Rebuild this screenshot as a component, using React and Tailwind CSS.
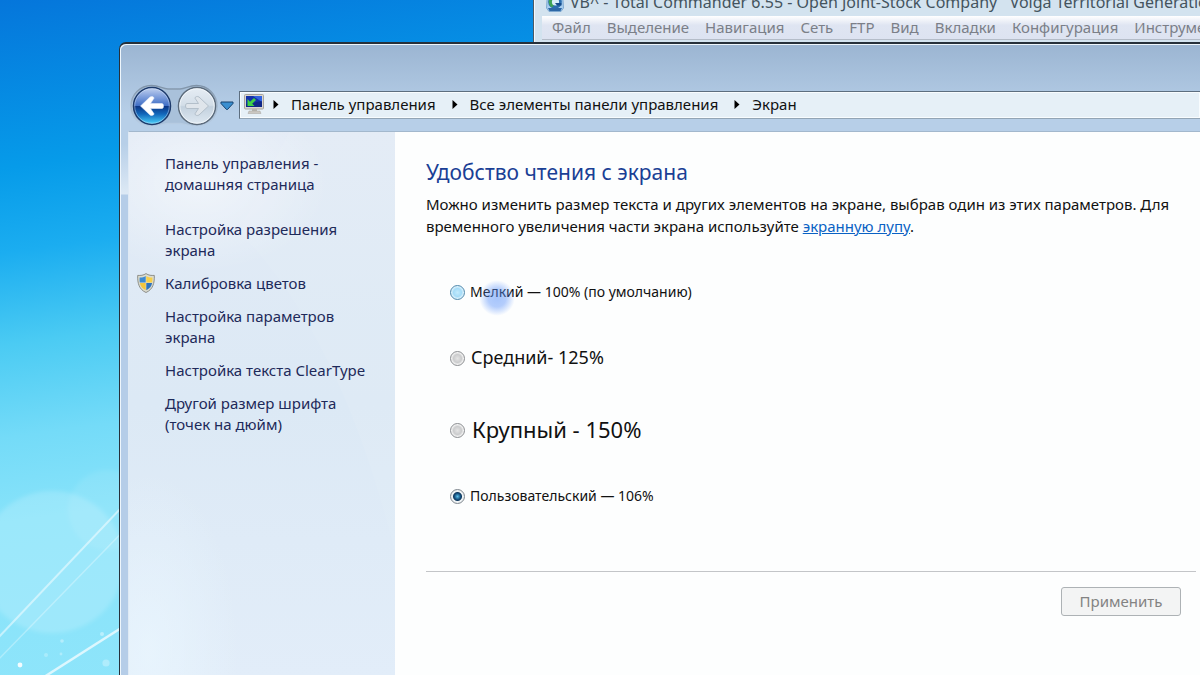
import React, { useState } from "react";

const menuItems = ["Файл", "Выделение", "Навигация", "Сеть", "FTP", "Вид", "Вкладки", "Конфигурация", "Инструменты"];

const sideLinks = [
  { text: "Настройка разрешения экрана" },
  { text: "Калибровка цветов", shield: true },
  { text: "Настройка параметров экрана" },
  { text: "Настройка текста ClearType" },
  { text: "Другой размер шрифта (точек на дюйм)" },
];

const sizes = [
  { id: "small", label: "Мелкий — 100% (по умолчанию)", row: "h-6", text: "text-[14px]" },
  { id: "medium", label: "Средний- 125%", row: "h-9", text: "text-[18px] pl-px" },
  { id: "large", label: "Крупный - 150%", row: "h-9", text: "text-[22px] pl-[2px]" },
  { id: "custom", label: "Пользовательский — 106%", row: "h-6", text: "text-[14px]" },
];

function Wallpaper() {
  return (
    <svg className="absolute bottom-0 left-0 h-[235px] w-[140px]" viewBox="0 0 140 235" fill="none" aria-hidden="true">
      <defs>
        <filter id="soft" x="-20%" y="-20%" width="140%" height="140%">
          <feGaussianBlur stdDeviation="0.7" />
        </filter>
        <filter id="softer" x="-20%" y="-20%" width="140%" height="140%">
          <feGaussianBlur stdDeviation="2" />
        </filter>
      </defs>
      <g filter="url(#softer)">
        <ellipse cx="52" cy="122" rx="72" ry="71" fill="#fff" opacity="0.16" />
        <circle cx="108" cy="70" r="40" fill="#fff" opacity="0.08" />
      </g>
      <g stroke="#fff" filter="url(#soft)">
        <path d="M-4 200 L140 48" strokeWidth="2" opacity="0.5" />
        <path d="M-4 222 L140 74" strokeWidth="1.5" opacity="0.3" />
        <path d="M44 237 L140 176" strokeWidth="2.5" opacity="0.7" />
      </g>
      <g fill="#fff" filter="url(#soft)">
        <circle cx="20" cy="225" r="2.4" opacity="0.9" />
        <circle cx="62" cy="201" r="1.8" opacity="0.35" />
        <circle cx="102" cy="194" r="2" opacity="0.4" />
        <circle cx="46" cy="215" r="2" opacity="0.25" />
        <circle cx="61" cy="214" r="1.4" opacity="0.3" />
        <circle cx="106" cy="223" r="3.6" opacity="0.3" />
      </g>
    </svg>
  );
}

function CommanderIcon() {
  return (
    <svg className="h-[20px] w-[18px] shrink-0" viewBox="0 0 18 20" aria-hidden="true">
      <path d="M1.500 1 H16.500 L17.500 16 L15 19.500 H3 L0.500 16 Z" fill="#a9cff0" stroke="#6f9dc8" strokeWidth="0.800" />
      <path d="M2 16 L3.500 19 H14.500 L16 16 Z" fill="#2d68a6" />
      <circle cx="9" cy="10" r="6.800" fill="#2c6fb0" />
      <path d="M4 6 A6.500 6.500 0 0 0 6 15.500 L8 13 A4 4 0 0 1 6.500 8 Z" fill="#3fa356" />
      <circle cx="9.500" cy="10" r="3.600" fill="#d9f0f8" />
      <path d="M9 11 H15.500 V13.500 H11 Z" fill="#174c8a" />
    </svg>
  );
}

function NavDrawing() {
  return (
    <svg className="absolute inset-0 h-[44px] w-[90px]" viewBox="0 0 90 44" aria-hidden="true">
      <defs>
        <linearGradient id="rim" x1="0" y1="0" x2="0" y2="1">
          <stop offset="0" stopColor="#7f93a8" />
          <stop offset="0.5" stopColor="#a3b7cc" />
          <stop offset="1" stopColor="#b9cfe6" />
        </linearGradient>
      </defs>
      <path
        d="M21.500 1.500 C29 1.500 32 4.500 38 5 H50 C56 4.500 59 1.500 66.500 1.500 A20.500 20.500 0 0 1 66.500 42.500 C59 42.500 56 40 50 39.500 H38 C32 40 29 42.500 21.500 42.500 A20.500 20.500 0 0 1 21.500 1.500 Z"
        fill="#a9c1da"
        stroke="url(#rim)"
        strokeWidth="1.500"
      />
    </svg>
  );
}

function BackIcon() {
  return (
    <svg className="h-[40px] w-[40px]" viewBox="0 0 40 40" aria-hidden="true">
      <defs>
        <linearGradient id="backTop" x1="0" y1="0" x2="0" y2="1">
          <stop offset="0" stopColor="#c3d3f0" />
          <stop offset="0.25" stopColor="#7f9fdc" />
          <stop offset="0.5" stopColor="#3d6cc4" />
          <stop offset="0.51" stopColor="#0b3585" />
          <stop offset="0.72" stopColor="#1268bb" />
          <stop offset="1" stopColor="#4fd8ff" />
        </linearGradient>
      </defs>
      <circle cx="20" cy="20" r="18.500" fill="url(#backTop)" stroke="#1d3a6b" strokeWidth="1.500" />
      <circle cx="20" cy="20" r="17.300" fill="none" stroke="#dbe9fb" strokeWidth="0.800" opacity="0.550" />
      <path
        d="M8.500 20 L18 11 C19.500 10 22 10.500 22 12.200 L18.500 17.500 H30 Q31.500 17.500 31.500 20 Q31.500 22.500 30 22.500 H18.500 L22 27.800 C22 29.500 19.500 30 18 29 Z"
        fill="#fff"
        stroke="#e6edf8"
        strokeWidth="0.600"
        strokeLinejoin="round"
      />
    </svg>
  );
}

function ForwardIcon() {
  return (
    <svg className="h-[40px] w-[40px]" viewBox="0 0 40 40" aria-hidden="true">
      <defs>
        <linearGradient id="fwd" x1="0" y1="0" x2="0" y2="1">
          <stop offset="0" stopColor="#e6edf4" />
          <stop offset="0.48" stopColor="#d3dee8" />
          <stop offset="0.52" stopColor="#c3d1de" />
          <stop offset="1" stopColor="#dfe9f2" />
        </linearGradient>
      </defs>
      <circle cx="20" cy="20" r="18.500" fill="url(#fwd)" stroke="#5c6b7b" strokeWidth="1.500" />
      <circle cx="20" cy="20" r="17.200" fill="none" stroke="#f6fafd" strokeWidth="1" opacity="0.800" />
      <path
        d="M31.500 20 L22 11 C20.500 10 18 10.500 18 12.200 L21.500 17.500 H10 Q8.500 17.500 8.500 20 Q8.500 22.500 10 22.500 H21.500 L18 27.800 C18 29.500 20.500 30 22 29 Z"
        fill="#dfe5eb"
        stroke="#b3bfca"
        strokeWidth="1"
        strokeLinejoin="round"
      />
    </svg>
  );
}

function MonitorIcon() {
  return (
    <svg className="h-[20px] w-[20px] shrink-0" viewBox="0 0 20 20" aria-hidden="true">
      <rect x="0.500" y="0.500" width="19" height="14.500" rx="1" fill="#d9d6cf" stroke="#a7a59f" />
      <rect x="2" y="2" width="16" height="11" fill="#1432a8" />
      <path d="M9 2 H18 V8 Z" fill="#2f62e0" />
      <path d="M2 10 L18 7 V13 H2 Z" fill="#0d2272" opacity="0.600" />
      <path d="M3.500 5 V12 H10.500 L8.200 9.800 L12 6 L10 4 L6 7.800 Z" fill="#3fd046" />
      <path d="M8 15 H13 V17 H8 Z" fill="#b7b4ad" />
      <path d="M5 17 H16 L17 19.500 H4 Z" fill="#cbc8c2" stroke="#a7a59f" strokeWidth="0.500" />
    </svg>
  );
}

function ShieldIcon() {
  return (
    <svg className="h-[20px] w-[18px]" viewBox="0 0 18 20" aria-hidden="true">
      <path d="M9 0.600 C11.500 2.400 14.500 2.600 17.300 2.400 C17.600 10 16 16.500 9 19.500 C2 16.500 0.400 10 0.700 2.400 C3.500 2.600 6.500 2.400 9 0.600 Z" fill="#dcdccf" stroke="#85867f" strokeWidth="0.900" />
      <path d="M8.700 3 V9.500 H2.800 C2.500 7.500 2.500 6 2.600 4.500 C4.700 4.600 6.900 4.200 8.700 3 Z" fill="#3c8ad2" />
      <path d="M9.300 3 C11.100 4.200 13.300 4.600 15.400 4.500 C15.500 6 15.500 7.500 15.200 9.500 H9.300 Z" fill="#f7d04a" />
      <path d="M2.900 10.100 H8.700 V17.200 C5.300 15.600 3.400 13.500 2.900 10.100 Z" fill="#f3c63c" />
      <path d="M15.100 10.100 H9.300 V17.200 C12.700 15.600 14.600 13.500 15.100 10.100 Z" fill="#2e74bf" />
    </svg>
  );
}

function Chevron() {
  return (
    <svg className="h-[9px] w-[6px] shrink-0" viewBox="0 0 6 9" aria-hidden="true">
      <path d="M0.500 0 L5.500 4.500 L0.500 9 Z" fill="#000" />
    </svg>
  );
}

function CommanderWindow() {
  return (
    <section className="absolute -top-3 right-0 left-[533px] h-[58px] border-l border-[#4a5a66] bg-[#d3e3ef] pl-2 shadow-[inset_1px_0_0_#f2f8fc]">
      <header className="flex h-7 items-center gap-[6px] overflow-hidden pl-1 text-[16px] leading-6 whitespace-pre text-[#44545e]">
        <CommanderIcon />
        <span>VB^ - Total Commander 6.55 - Open Joint-Stock Company   Volga Territorial Generation</span>
      </header>
      <nav className="flex h-[24px] items-center gap-4 overflow-hidden border-b border-[#b4bcc8] bg-linear-to-b from-white via-[#dfe5f2] via-40% to-[#dde3f1] pl-[10px] text-[15px] whitespace-nowrap text-[#7b7f88]">
        {menuItems.map((item) => (
          <button key={item} type="button" className="shrink-0">{item}</button>
        ))}
      </nav>
    </section>
  );
}

function NavigationBar() {
  return (
    <div className="flex h-[48px] items-center pl-[2px]">
      <div className="relative mt-[2px] flex h-[44px] w-[90px] shrink-0 items-center gap-[5px] pl-[2px]">
        <NavDrawing />
        <button type="button" aria-label="Назад" className="relative"><BackIcon /></button>
        <button type="button" aria-label="Вперёд" className="relative"><ForwardIcon /></button>
      </div>
      <button type="button" aria-label="Последние страницы" className="mt-[2px] shrink-0">
        <svg className="h-[10px] w-[14px]" viewBox="0 0 14 10" aria-hidden="true">
          <path d="M1 1 H13 L13 2.500 L7.500 8.500 H6.500 L1 2.500 Z" fill="#3a8fd0" stroke="#16426f" strokeWidth="1" strokeLinejoin="round" />
        </svg>
      </button>
      <nav aria-label="Адрес" className="ml-[5px] flex h-[28px] grow items-center overflow-hidden border border-r-0 border-[#5d6e7f] border-b-[#93a5b5] bg-[#e6f0f7] pb-[2px] pl-1 text-[15px] whitespace-nowrap text-[#111] shadow-[inset_0_0_0_1px_#f8fcfe]">
        <MonitorIcon />
        <span className="w-[9px] shrink-0" />
        <Chevron />
        <a href="#panel" className="mr-4 ml-3">Панель управления</a>
        <Chevron />
        <a href="#all" className="mr-4 ml-3">Все элементы панели управления</a>
        <Chevron />
        <a href="#display" className="mr-4 ml-3">Экран</a>
      </nav>
    </div>
  );
}

function Sidebar() {
  return (
    <aside className="relative w-[266px] shrink-0 overflow-hidden bg-linear-to-b from-[#e3ebf6] via-[#dce9f5] via-50% to-[#e2edf9] pt-[21px] text-[15px] leading-[21px] text-[#1e2a5a]">
      <svg className="absolute inset-0 h-full w-full" viewBox="0 0 266 543" preserveAspectRatio="none" aria-hidden="true">
        <defs>
          <radialGradient id="mist"><stop offset="0" stopColor="#fff" stopOpacity="0.5" /><stop offset="1" stopColor="#fff" stopOpacity="0" /></radialGradient>
          <radialGradient id="glow"><stop offset="0" stopColor="#eaf7ff" stopOpacity="0.7" /><stop offset="1" stopColor="#eaf7ff" stopOpacity="0" /></radialGradient>
        </defs>
        <ellipse cx="70" cy="50" rx="130" ry="90" fill="url(#mist)" />
        <ellipse cx="20" cy="520" rx="90" ry="180" fill="url(#glow)" />
        <path d="M110 100 Q210 200 266 420 V0 H160 Z" fill="#fff" opacity="0.06" />
      </svg>
      <nav className="relative flex flex-col gap-3 pr-[18px] pl-9">
        <a href="#home" className="mb-3">Панель управления - домашняя страница</a>
        {sideLinks.map((link) => (
          <a key={link.text} href="#task" className="relative">
            {link.shield && <span className="absolute top-0 -left-[28px]"><ShieldIcon /></span>}
            {link.text}
          </a>
        ))}
      </nav>
    </aside>
  );
}

function SizeOptions() {
  const [selected, setSelected] = useState("custom");
  return (
    <div role="radiogroup" aria-label="Размер текста" className="mt-[43px] flex flex-col gap-9 pl-6">
      {sizes.map((size) => (
        <div key={size.id} className={`relative flex items-center gap-[5px] ${size.row}`}>
          <input
            id={size.id}
            type="radio"
            name="size"
            checked={selected === size.id}
            onChange={() => setSelected(size.id)}
            className={`h-[15px] w-[15px] shrink-0 appearance-none rounded-full border ${
              selected === size.id
                ? "border-[#7f878e] bg-[radial-gradient(circle,#5cc0ea_0px,#14507f_3px,#123b60_4px,#eef2f4_5px)]"
                : size.id === "small"
                  ? "border-[#4f88ac] bg-[radial-gradient(circle,#c4ebfd_0px,#a5dcf8_4px,#d9f1fc_6px)]"
                  : "border-[#8a8d90] bg-[radial-gradient(circle,#e4e4e4_0px,#cbcccd_4px,#f2f2f2_6px)]"
            }`}
          />
          <label htmlFor={size.id} className={`pb-[2px] whitespace-nowrap text-[#111] ${size.text}`}>{size.label}</label>
          {size.id === "small" && (
            <span className="pointer-events-none absolute top-0 left-[29px] h-[36px] w-[36px] rounded-full bg-[radial-gradient(circle,rgba(80,140,250,0.5)_0%,rgba(90,145,250,0.45)_35%,rgba(140,175,250,0)_70%)]" />
          )}
        </div>
      ))}
    </div>
  );
}

export default function App() {
  return (
    <div className="relative h-screen overflow-hidden bg-linear-[172deg,#0576db_0%,#069be9_20%,#1badf0_30%,#4bcbf3_41%,#74dbf8_52%,#88e3fa_62%,#93e6fb_100%] font-['Noto_Sans','Open_Sans',sans-serif]">
      <Wallpaper />
      <CommanderWindow />
      <section className="absolute top-[42px] right-0 bottom-0 left-[119px] flex flex-col overflow-hidden rounded-tl-[7px] border-t-2 border-l border-[#26303a] bg-[#b7cfe8] bg-[linear-gradient(to_bottom,#9bb5d2_0px,#b7cfe8_70px,#b7cfe8_100px,#dde9f5_150px,#b5cde8_151px)] pl-2 shadow-[inset_1px_1px_0_#eef6fc]">
        <header className="h-[37px] shrink-0" />
        <NavigationBar />
        <div className="mt-[2px] flex grow border-t border-l border-[#a3b8cd] border-l-[#dfeaf5] bg-[#fdfefe]">
          <Sidebar />
          <main className="min-w-0 grow pt-6 pr-1 pl-[31px]">
            <h1 className="text-[21px] leading-8 text-[#1a3f95]">Удобство чтения с экрана</h1>
            <p className="mt-[5px] text-[15px] leading-[22px] whitespace-nowrap text-[#111]">
              Можно изменить размер текста и других элементов на экране, выбрав один из этих параметров. Для
              <br />
              временного увеличения части экрана используйте{" "}
              <a href="#magnifier" className="text-[#0a62c4] underline">экранную лупу</a>.
            </p>
            <SizeOptions />
            <div className="mt-[63px] flex justify-end border-t border-[#c3c5c8] pt-[15px] pr-[15px]">
              <button type="button" disabled className="h-[29px] w-[120px] rounded-[3px] border border-[#adb2b5] bg-[#f3f4f4] text-[15px] text-[#838383]">
                Применить
              </button>
            </div>
          </main>
        </div>
      </section>
    </div>
  );
}
